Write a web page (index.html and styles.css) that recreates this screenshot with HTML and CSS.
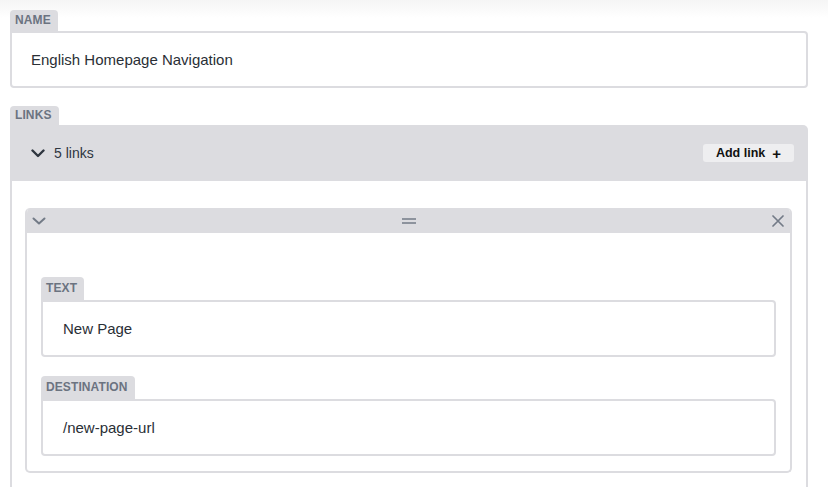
FILE: index.html
```html
<!DOCTYPE html>
<html lang="en">
<head>
<meta charset="utf-8">
<title>Navigation</title>
<link rel="stylesheet" href="styles.css">
</head>
<body>
<div class="page">
  <section class="field">
    <div class="tab">NAME</div>
    <div class="box"><span class="value">English Homepage Navigation</span></div>
  </section>

  <section class="field links">
    <div class="tab">LINKS</div>
    <div class="panel">
      <div class="panel-head">
        <div class="toggle">
          <svg class="chev" width="14" height="9" viewBox="0 0 14 9"><path d="M1.5 1.5 L7 7 L12.5 1.5" fill="none" stroke="#2f3640" stroke-width="2.4" stroke-linecap="round" stroke-linejoin="round"/></svg>
          <span class="count">5 links</span>
        </div>
        <button class="add">Add link <span class="plus">+</span></button>
      </div>
      <div class="panel-body">
        <div class="card">
          <div class="card-head">
            <svg width="14" height="8" viewBox="0 0 14 8"><path d="M1.5 1.5 L7 6.5 L12.5 1.5" fill="none" stroke="#737b87" stroke-width="2" stroke-linecap="round" stroke-linejoin="round"/></svg>
            <svg width="14" height="6" viewBox="0 0 14 6"><path d="M0 1 H14 M0 5 H14" stroke="#737b87" stroke-width="1.6"/></svg>
            <svg width="12" height="12" viewBox="0 0 12 12"><path d="M1 1 L11 11 M11 1 L1 11" stroke="#737b87" stroke-width="1.7" stroke-linecap="round"/></svg>
          </div>
          <div class="card-body">
            <div class="field">
              <div class="tab">TEXT</div>
              <div class="box"><span class="value">New Page</span></div>
            </div>
            <div class="field">
              <div class="tab">DESTINATION</div>
              <div class="box"><span class="value">/new-page-url</span></div>
            </div>
          </div>
        </div>
      </div>
    </div>
  </section>
</div>
</body>
</html>
```

FILE: styles.css
```css
* { box-sizing: border-box; }
html, body {
  margin: 0;
  padding: 0;
  background: #fff;
}
body {
  font-family: "Liberation Sans", Arial, sans-serif;
  color: #2a2f36;
  background: linear-gradient(#f5f5f5 0, #ffffff 18px) no-repeat;
  height: 487px;
  overflow: hidden;
}
.page {
  padding: 10px 20px 0 10px;
  display: flex;
  flex-direction: column;
  gap: 18px;
}
.field {
  display: flex;
  flex-direction: column;
  align-items: flex-start;
}
.tab {
  background: #dcdce0;
  color: #6b7380;
  font-size: 12px;
  font-weight: bold;
  height: 21px;
  line-height: 21px;
  padding: 0 7px 0 5px;
  border-radius: 4px 4px 0 0;
  letter-spacing: 0.1px;
}
.box {
  align-self: stretch;
  height: 57px;
  border: 2px solid #dcdce0;
  border-radius: 0 4px 4px 4px;
  display: flex;
  align-items: center;
  padding-left: 19px;
  background: #fff;
}
.value {
  font-size: 15px;
  color: #2a2f36;
}
.links .tab { height: 19px; line-height: 19px; }
.panel {
  align-self: stretch;
}
.panel-head {
  background: #dcdce0;
  height: 56px;
  border-radius: 0 5px 0 0;
  display: flex;
  align-items: center;
  justify-content: space-between;
  padding: 0 14px 0 21px;
}
.toggle {
  display: flex;
  align-items: center;
  gap: 9px;
}
.count {
  font-size: 14px;
  color: #2f3640;
}
.add {
  font-family: "Liberation Sans", Arial, sans-serif;
  font-size: 12.5px;
  font-weight: bold;
  color: #111;
  background: #eeeef0;
  border: none;
  border-radius: 3px;
  height: 18px;
  width: 91px;
  padding: 0;
  display: flex;
  align-items: center;
  justify-content: center;
  gap: 7px;
}
.plus { font-size: 15px; line-height: 1; }
.panel-body {
  border-left: 2px solid #dcdce0;
  border-right: 2px solid #dcdce0;
  padding: 27px 14px 40px 13px;
}
.card {
  border: 2px solid #dcdce0;
  border-top: none;
  border-radius: 5px;
  overflow: hidden;
}
.card-head {
  background: #dcdce0;
  height: 25px;
  display: flex;
  align-items: center;
  justify-content: space-between;
  padding: 0 8px 0 7px;
  margin: 0 -2px;
}
.card-body {
  padding: 44px 14px 15px 14px;
  display: flex;
  flex-direction: column;
  gap: 19px;
}
.card-body .tab { height: 23px; line-height: 23px; }
.card-body .box { height: 57px; padding-left: 20px; }
```
